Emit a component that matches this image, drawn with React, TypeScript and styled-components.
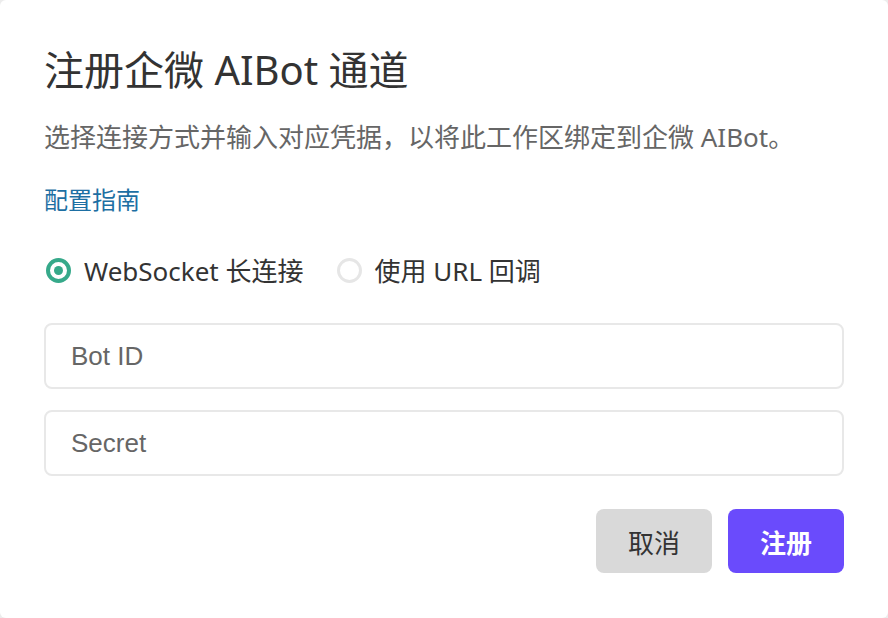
import { useState } from 'react';
import styled, { createGlobalStyle } from 'styled-components';

const GlobalStyle = createGlobalStyle`
    html, body {
        margin: 0;
        padding: 0;
        background: #ececec;
    }
    * {
        box-sizing: border-box;
    }
`;

const Dialog = styled.div`
    width: 888px;
    height: 618px;
    display: flex;
    flex-direction: column;
    padding: 44px 44px 0 44px;
    background: #fff;
    border-radius: 6px;
    font-family: "Noto Sans", "Noto Sans CJK SC", sans-serif;
`;

const Title = styled.h1`
    margin: 0;
    font-size: 40px;
    line-height: 52px;
    font-weight: 400;
    color: #333;
`;

const Subtitle = styled.p`
    margin: 23px 0 0 0;
    font-size: 26px;
    line-height: 36px;
    color: #666;
`;

const GuideLink = styled.a`
    align-self: flex-start;
    margin-top: 28px;
    font-size: 24px;
    line-height: 34px;
    color: #1d6fa3;
    text-decoration: none;
    cursor: pointer;
`;

const RadioGroup = styled.div`
    display: flex;
    align-items: center;
    gap: 31px;
    margin-top: 36px;
    height: 34px;
`;

const RadioOption = styled.label`
    display: flex;
    align-items: center;
    gap: 13px;
    cursor: pointer;
    font-size: 26px;
    color: #333;
`;

const RadioDot = styled.span<{ $checked: boolean }>`
    width: 25px;
    height: 25px;
    margin-left: 2px;
    border-radius: 50%;
    border: ${props => props.$checked ? '4px solid #36a98a' : '3px solid #e6e6e6'};
    display: flex;
    align-items: center;
    justify-content: center;

    &::after {
        content: '';
        width: 9px;
        height: 9px;
        border-radius: 50%;
        background: ${props => props.$checked ? '#36a98a' : 'transparent'};
    }
`;

const Field = styled.input`
    height: 66px;
    width: 100%;
    padding: 0 25px;
    border: 2px solid #e8e8e8;
    border-radius: 8px;
    font-family: "Liberation Sans", Arial, sans-serif;
    font-size: 26px;
    color: #333;
    outline: none;

    &::placeholder {
        color: #666;
    }
`;

const Fields = styled.div`
    display: flex;
    flex-direction: column;
    gap: 21px;
    margin-top: 36px;
`;

const Actions = styled.div`
    display: flex;
    justify-content: flex-end;
    gap: 16px;
    margin-top: 33px;
`;

const Button = styled.button<{ $primary?: boolean }>`
    width: 116px;
    height: 64px;
    border: none;
    border-radius: 8px;
    font-family: "Noto Sans CJK SC", sans-serif;
    font-size: 26px;
    font-weight: ${props => props.$primary ? 700 : 400};
    color: ${props => props.$primary ? '#fff' : '#333'};
    background: ${props => props.$primary ? '#6a4bfc' : '#d9d9d9'};
    cursor: pointer;
`;

export default function App() {
    const [mode, setMode] = useState<'ws' | 'url'>('ws');

    return (
        <>
            <GlobalStyle />
            <Dialog>
                <Title>注册企微 AIBot 通道</Title>
                <Subtitle>选择连接方式并输入对应凭据，以将此工作区绑定到企微 AIBot。</Subtitle>
                <GuideLink>配置指南</GuideLink>
                <RadioGroup>
                    <RadioOption onClick={() => setMode('ws')}>
                        <RadioDot $checked={mode === 'ws'} />
                        WebSocket 长连接
                    </RadioOption>
                    <RadioOption onClick={() => setMode('url')}>
                        <RadioDot $checked={mode === 'url'} />
                        使用 URL 回调
                    </RadioOption>
                </RadioGroup>
                <Fields>
                    <Field placeholder="Bot ID" />
                    <Field placeholder="Secret" />
                </Fields>
                <Actions>
                    <Button>取消</Button>
                    <Button $primary>注册</Button>
                </Actions>
            </Dialog>
        </>
    );
}
